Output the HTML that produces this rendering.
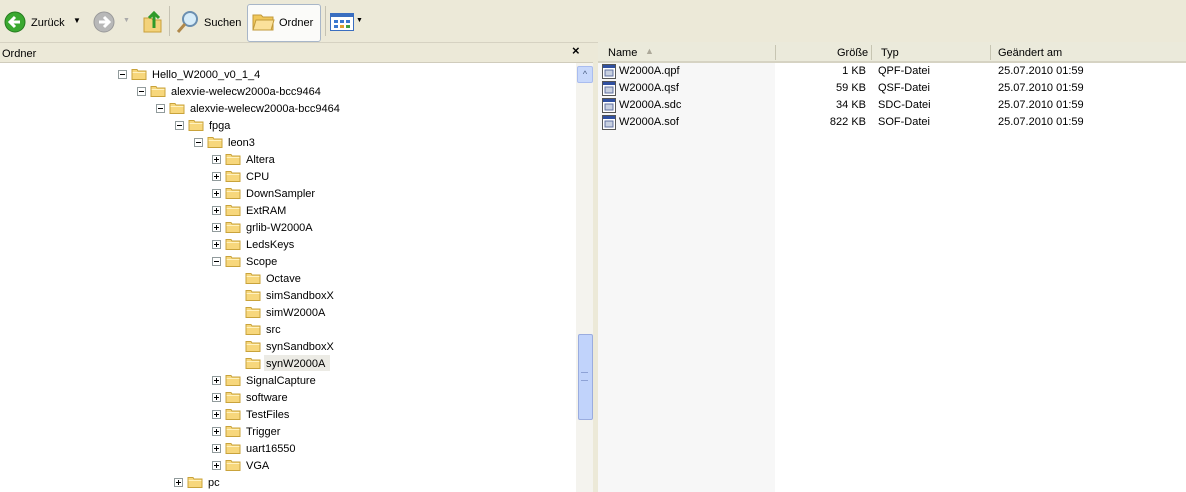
<!DOCTYPE html><html><head><meta charset="utf-8"><style>
body{margin:0;width:1186px;height:492px;overflow:hidden;background:#ece9d8;font-family:Tahoma,"Liberation Sans",sans-serif;font-size:11px;color:#000;position:relative}
.a{position:absolute;white-space:nowrap}
.tb{position:absolute;left:0;top:0;width:1186px;height:42px;background:#ece9d8;border-bottom:1px solid #d6d2c2}
.tree{position:absolute;left:0;top:63px;width:576px;height:429px;background:#fff}
.sb{position:absolute;left:576px;top:63px;width:17px;height:429px;background:#f4f3ee}
.list{position:absolute;left:598px;top:63px;width:588px;height:429px;background:#fff}
.ex{position:absolute;width:7px;height:7px;border:1px solid #919b9c;background:#fff;font-size:0}
.ex:before{content:"";position:absolute;left:1px;top:3px;width:5px;height:1px;background:#000}
.ex.p:after{content:"";position:absolute;left:3px;top:1px;width:1px;height:5px;background:#000}
.fd{position:absolute;width:16px;height:12px}
</style></head><body>
<div class="tb">
<svg class="a" style="left:4px;top:11px" width="22" height="22"><circle cx="11" cy="11" r="10" fill="#3aa830" stroke="#257a1e"/><path d="M16 11H7M11 6L6 11L11 16" stroke="#fff" stroke-width="3" fill="none"/></svg>
<span class="a" style="left:31px;top:17px">Zurück</span>
<span class="a" style="left:73px;top:16px;font-size:8px">▼</span>
<svg class="a" style="left:93px;top:11px" width="22" height="22"><circle cx="11" cy="11" r="10" fill="#b8b8b8" stroke="#999"/><path d="M6 11H15M11 6L16 11L11 16" stroke="#fff" stroke-width="3" fill="none"/></svg>
<span class="a" style="left:123px;top:17px;font-size:7px;color:#aaa">▼</span>
<svg class="a" style="left:142px;top:8px" width="22" height="26"><path d="M2 10h7l2 2h8v12H2z" fill="#f3d27a" stroke="#c9a03a"/><path d="M12 20V6M7 10l5-5 5 5" stroke="#2f9a2a" stroke-width="3" fill="none"/></svg>
<div class="a" style="left:169px;top:6px;width:1px;height:30px;background:#c5c2b2"></div>
<svg class="a" style="left:175px;top:9px" width="26" height="26"><circle cx="15" cy="10" r="7" fill="#d7ecf8" stroke="#6b8fb0" stroke-width="2"/><path d="M10 15L3 23" stroke="#b0884a" stroke-width="3"/></svg>
<span class="a" style="left:204px;top:17px">Suchen</span>
<div class="a" style="left:247px;top:4px;width:72px;height:36px;background:#fbfbf9;border:1px solid #a8b6c8;border-radius:3px"></div>
<svg class="a" style="left:252px;top:12px" width="24" height="20"><path d="M1 3h8l2 2h10v13H1z" fill="#f0c75a" stroke="#c29a3a"/><path d="M4 8h18l-3 10H1z" fill="#fbe19a" stroke="#c29a3a"/></svg>
<span class="a" style="left:279px;top:17px">Ordner</span>
<div class="a" style="left:325px;top:6px;width:1px;height:30px;background:#c5c2b2"></div>
<svg class="a" style="left:330px;top:13px" width="24" height="18"><rect x="0.5" y="0.5" width="23" height="17" fill="#fff" stroke="#3a6ec0"/><rect x="1" y="1" width="22" height="3" fill="#3a6ec0"/><g fill="#3a78d0"><rect x="4" y="7" width="4" height="3"/><rect x="10" y="7" width="4" height="3"/><rect x="16" y="7" width="4" height="3"/><rect x="4" y="12" width="4" height="3"/><rect x="10" y="12" width="4" height="3" fill="#e0a030"/><rect x="16" y="12" width="4" height="3" fill="#40a040"/></g></svg>
<span class="a" style="left:356px;top:17px;font-size:7px">▼</span>
</div>
<div class="a" style="left:0;top:43px;width:593px;height:19px;border-bottom:1px solid #d0ccbc"></div>
<span class="a" style="left:2px;top:48px">Ordner</span>
<span class="a" style="left:572px;top:43px;font-size:13px;font-weight:bold">×</span>
<div class="a" style="left:598px;top:42px;width:588px;height:19px;background:#ebeadb;border-bottom:2px solid #d6d3c3"></div>
<span class="a" style="left:608px;top:47px">Name</span>
<span class="a" style="left:645px;top:46px;font-size:9px;color:#aca899">▲</span>
<div class="a" style="left:775px;top:45px;width:1px;height:15px;background:#c7c5b2"></div>
<span class="a" style="left:837px;top:47px">Größe</span>
<div class="a" style="left:871px;top:45px;width:1px;height:15px;background:#c7c5b2"></div>
<span class="a" style="left:881px;top:47px">Typ</span>
<div class="a" style="left:990px;top:45px;width:1px;height:15px;background:#c7c5b2"></div>
<span class="a" style="left:998px;top:47px">Geändert am</span>
<div class="tree"></div>
<div class="sb">
<div class="a" style="left:1px;top:3px;width:14px;height:15px;background:#c8d8fb;border:1px solid #a9bcef;border-radius:2px;font-size:9px;text-align:center;line-height:14px;color:#4d6185">^</div>
<div class="a" style="left:2px;top:271px;width:13px;height:84px;background:#c1d3fb;border:1px solid #9aacdf;border-radius:2px"></div>
<div class="a" style="left:5px;top:309px;width:7px;height:7px;border-top:1px solid #8ea2d6;border-bottom:1px solid #8ea2d6"></div>
</div>
<div class="list"><div class="a" style="left:0;top:0;width:177px;height:429px;background:#f7f7f7"></div></div>
<div id="t"></div>
<div id="l"></div>
<script>
var rows=[[122,"Hello_W2000_v0_1_4",1],[141,"alexvie-welecw2000a-bcc9464",1],[160,"alexvie-welecw2000a-bcc9464",1],[179,"fpga",1],[198,"leon3",1],[216,"Altera",2],[216,"CPU",2],[216,"DownSampler",2],[216,"ExtRAM",2],[216,"grlib-W2000A",2],[216,"LedsKeys",2],[216,"Scope",1],[235,"Octave",0],[235,"simSandboxX",0],[235,"simW2000A",0],[235,"src",0],[235,"synSandboxX",0],[235,"synW2000A",0],[216,"SignalCapture",2],[216,"software",2],[216,"TestFiles",2],[216,"Trigger",2],[216,"uart16550",2],[216,"VGA",2],[178,"pc",2]];
var h="";
rows.forEach(function(r,i){var y=74+17*i,x=r[0];
if(r[2])h+='<div class="ex'+(r[2]==2?' p':'')+'" style="left:'+(x-4)+'px;top:'+(y-4)+'px"></div>';
var fx=x+9+(r[2]?0:1);
h+='<svg class="fd" style="left:'+fx+'px;top:'+(y-6)+'px" viewBox="0 0 16 12"><path d="M1 1.5h5l1 1.5h8v8.5H1z" fill="#f7d77c" stroke="#c9a33b"/><path d="M1.5 4.5h13" stroke="#fff2c0"/></svg>';
var tx=fx+21;
if(r[1]=="synW2000A")h+='<div class="a" style="left:'+(tx-2)+'px;top:'+(y-8)+'px;width:66px;height:16px;background:#ecebe5"></div>';
h+='<span class="a" style="left:'+tx+'px;top:'+(y-5)+'px">'+r[1]+'</span>';});
document.getElementById("t").innerHTML=h;
var f=[["W2000A.qpf","1 KB","QPF-Datei"],["W2000A.qsf","59 KB","QSF-Datei"],["W2000A.sdc","34 KB","SDC-Datei"],["W2000A.sof","822 KB","SOF-Datei"]];
h="";f.forEach(function(r,i){var y=71+17*i;
h+='<svg class="a" style="left:602px;top:'+(y-7)+'px" width="14" height="15"><rect x="0.5" y="0.5" width="13" height="14" fill="#fff" stroke="#555"/><rect x="1" y="1" width="12" height="3" fill="#3050a0"/><rect x="3" y="6" width="8" height="6" fill="#c8d0e0" stroke="#6070a0"/></svg>';
h+='<span class="a" style="left:619px;top:'+(y-6)+'px">'+r[0]+'</span><span class="a" style="right:320px;top:'+(y-6)+'px">'+r[1]+'</span><span class="a" style="left:878px;top:'+(y-6)+'px">'+r[2]+'</span><span class="a" style="left:998px;top:'+(y-6)+'px">25.07.2010 01:59</span>';});
document.getElementById("l").innerHTML=h;
</script>
</body></html>
